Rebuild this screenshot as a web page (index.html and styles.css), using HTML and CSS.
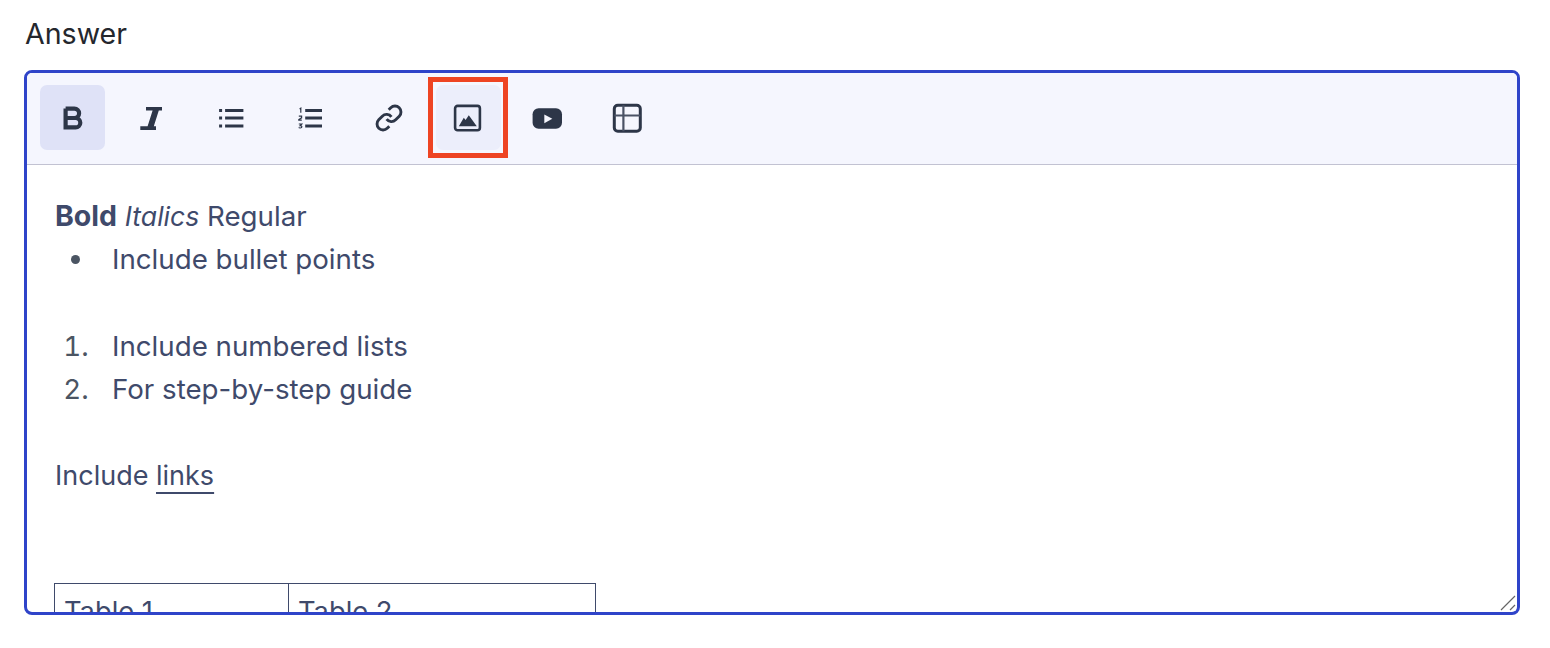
FILE: index.html
```html
<!DOCTYPE html>
<html lang="en">
<head>
  <meta charset="UTF-8">
  <title>Answer editor</title>
  <link rel="stylesheet" href="styles.css">
</head>
<body>
  <label class="field-label">Answer</label>
  <div class="editor">
    <div class="toolbar">
      <button class="tool active" aria-label="Bold">
        <svg class="icon" viewBox="0 0 32 32"><path class="line heavy" d="M8.6 6.6H17.4a4.7 4.7 0 0 1 0 9.4H8.6M8.6 16H18.6a4.7 4.7 0 0 1 0 9.4H8.6ZM8.6 6.6V25.4"/></svg>
      </button>
      <button class="tool" aria-label="Italic">
        <svg class="icon" viewBox="0 0 32 32"><path class="solid" d="M10 5H26V8.6H22.8L17.8 24.2H20V28H4.3V24.2H11.6L16.6 8.6H10Z"/></svg>
      </button>
      <button class="tool" aria-label="Bullet list">
        <svg class="icon" viewBox="0 0 32 32"><path class="line" d="M10.1 8.5H28.4M10.1 16H28.4M10.1 24H28.4M4.1 8.5H7.1M4.1 16H7.1M4.1 24H7.1" stroke-width="3"/></svg>
      </button>
      <button class="tool" aria-label="Numbered list">
        <svg class="icon" viewBox="0 0 32 32">
          <path class="line" d="M11.2 8.5H28M11.2 16H28M11.2 24H28" stroke-width="3"/>
          <path class="line" d="M5.6 7l1.2-.8v4.6M4.8 14.2h2.8v1.6l-2.8 1.8v.6h3M4.8 22h3l-1.6 1.6c1.2 0 1.7.4 1.7 1.2s-.7 1.2-1.6 1.2-1.4-.2-1.5-.6" stroke-width="1.2"/>
        </svg>
      </button>
      <button class="tool" aria-label="Link">
        <svg class="icon" viewBox="-1.3 -1.3 26.6 26.6"><path class="line" d="M10 13a5 5 0 0 0 7.54.54l3-3a5 5 0 0 0-7.07-7.07l-1.72 1.71M14 11a5 5 0 0 0-7.54-.54l-3 3a5 5 0 0 0 7.07 7.07l1.71-1.71" stroke-width="2.4"/></svg>
      </button>
      <button class="tool hovered" aria-label="Image">
        <svg class="icon" viewBox="0 0 32 32">
          <rect class="line" x="3.1" y="3.9" width="24.8" height="24.4" rx="2.5" stroke-width="2.6"/>
          <path class="solid" d="M6.8 24.2L11.8 15.8L13.6 18L16.8 13.2L24.8 24.2Z"/>
        </svg>
      </button>
      <button class="tool" aria-label="Video">
        <svg class="icon" viewBox="0 0 32 32">
          <rect class="solid" x="0.6" y="6.2" width="29.4" height="20.6" rx="6"/>
          <path class="cutout" d="M12.3 12.5L20.3 16.8L12.3 21.2Z"/>
        </svg>
      </button>
      <button class="tool" aria-label="Table">
        <svg class="icon" viewBox="0 0 32 32">
          <rect class="line" x="3.3" y="3.3" width="26" height="26" rx="3.5" stroke-width="3"/>
          <path class="line thin" d="M3.3 13.5H29.3M12.4 3.3V29.3" stroke-width="2.2"/>
        </svg>
      </button>
    </div>
    <div class="content">
      <div class="wide"><strong>Bold</strong> <em>Italics</em> Regular</div>
      <ul class="bullets wide">
        <li>Include bullet points</li>
      </ul>
      <br>
      <ol class="numbers wide">
        <li>Include numbered lists</li>
        <li>For step-by-step guide</li>
      </ol>
      <br>
      <div>Include <a href="#">links</a></div>
      <br>
      <br>
      <table class="sample-table">
        <tr>
          <td class="col-one">Table 1</td>
          <td class="col-two">Table 2</td>
        </tr>
      </table>
    </div>
    <svg class="resize-grip" viewBox="0 0 16 16"><path d="M1 15L15 1M10 15L15 10"/></svg>
  </div>
</body>
</html>
```

FILE: styles.css
```css
body {
  margin: 0;
  padding: 0;
  background-color: #fff;
  font-family: Inter, "Liberation Sans", sans-serif;
}

.field-label {
  display: block;
  height: 70px;
  padding-left: 25px;
  box-sizing: border-box;
  padding-top: 16px;
  font-size: 28.6px;
  line-height: 36px;
  font-weight: 400;
  color: #24272d;
}

.editor {
  position: relative;
  width: 1496px;
  height: 545px;
  margin-left: 24px;
  box-sizing: border-box;
  border: 3px solid #2f44c9;
  border-radius: 8px;
  overflow: hidden;
}

.toolbar {
  display: flex;
  gap: 14.2px;
  height: 92px;
  box-sizing: border-box;
  padding: 12px 13px;
  background-color: #f5f6fe;
  border-bottom: 1px solid #c2c2d2;
}

.tool {
  position: relative;
  display: flex;
  align-items: center;
  justify-content: center;
  width: 65px;
  height: 65px;
  padding: 0;
  border: none;
  border-radius: 7px;
  background-color: transparent;
}

.tool.active {
  background-color: #dfe2f7;
}

.tool.hovered {
  background-color: #eceefb;
}

/* Red callout round the image button */
.tool.hovered::after {
  content: "";
  position: absolute;
  top: -8px;
  right: -7px;
  bottom: -8px;
  left: -8px;
  border: 5px solid #ee4423;
}

.icon {
  width: 32px;
  height: 32px;
}

.line {
  fill: none;
  stroke: #2d3648;
}

.heavy {
  stroke-width: 4.2;
}

.thin {
  stroke: #4a5265;
}

.solid {
  fill: #2d3648;
}

.cutout {
  fill: #f5f6fe;
}

.content {
  height: 450px;
  box-sizing: border-box;
  padding: 28.6px 27px 0 28px;
  overflow: hidden;
  font-size: 27px;
  line-height: 43.2px;
  color: #3f4a6b;
}

.wide {
  font-size: 27.7px;
}

.wide strong {
  font-size: 28.5px;
}

.wide em {
  font-size: 26.6px;
}

.bullets,
.numbers {
  margin: 0;
  padding-left: 41px;
}

.numbers {
  padding-top: 0.5px;
  margin-bottom: -0.5px;
}

.bullets li,
.numbers li {
  padding-left: 16px;
}

.bullets li::marker,
.numbers li::marker {
  color: #4b5563;
}

.content a {
  color: inherit;
  text-decoration: underline;
  text-decoration-thickness: 2px;
  text-underline-offset: 7px;
}

.sample-table {
  border-collapse: collapse;
  margin-left: -1px;
  font-size: 27.3px;
}

.sample-table td {
  padding: 6px 9px;
  border: 1px solid #3f4a6b;
}

.col-one {
  width: 215px;
}

.col-two {
  width: 288px;
}

.resize-grip {
  position: absolute;
  right: 1px;
  bottom: 1px;
  width: 16px;
  height: 16px;
  background-color: #fff;
}

.resize-grip path {
  fill: none;
  stroke: #666;
  stroke-width: 1.2;
}
```
